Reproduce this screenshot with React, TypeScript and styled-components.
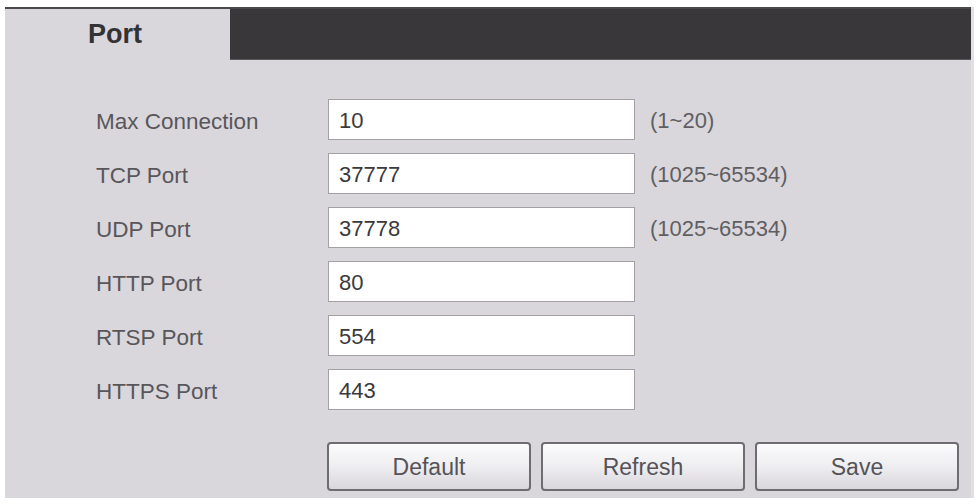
import React from 'react';
import styled, { createGlobalStyle } from 'styled-components';

const GlobalStyle = createGlobalStyle`
  html, body {
    margin: 0;
    padding: 0;
    background: #ffffff;
    font-family: 'Liberation Sans', Arial, sans-serif;
  }
`;

const Panel = styled.div`
  margin: 7px 6px 0 5px;
  width: 966px;
  height: 491px;
  background: #dad7dc;
  border-right: 3px solid #e2e0e3;
  display: flex;
  flex-direction: column;
`;

const Header = styled.div`
  display: flex;
  flex-shrink: 0;
  height: 53px;
  border-top: 2px solid #4a484b;
  box-sizing: border-box;
`;

const Tab = styled.div`
  width: 225px;
  display: flex;
  align-items: center;
  padding-left: 83px;
  box-sizing: border-box;
  font-size: 27px;
  font-weight: bold;
  color: #333235;
  background: #dad7dc;
`;

const TabFill = styled.div`
  flex: 1;
  background: #3a373b;
  border-bottom: 1px solid #5a585b;
`;

const Form = styled.div`
  padding: 39px 0 0 91px;
  display: flex;
  flex-direction: column;
  gap: 13px;
`;

const Row = styled.div`
  display: grid;
  grid-template-columns: 232px 307px auto;
  align-items: center;
  height: 41px;
`;

const Label = styled.label`
  font-size: 22.5px;
  color: #58565a;
  padding-top: 4px;
`;

const Input = styled.input`
  box-sizing: border-box;
  width: 307px;
  height: 41px;
  border: 1px solid #a3a1a5;
  background: #ffffff;
  padding: 2px 0 0 10px;
  font-family: 'Liberation Sans', Arial, sans-serif;
  font-size: 22px;
  color: #3a393c;
  outline: none;
`;

const Hint = styled.span`
  margin-left: 15px;
  font-size: 22px;
  color: #605e62;
  padding-top: 2px;
`;

const Buttons = styled.div`
  display: flex;
  gap: 10px;
  margin: 19px 0 0 231px;
`;

const Button = styled.button`
  width: 204px;
  height: 49px;
  border: 2px solid #6e6c70;
  border-radius: 4px;
  background: linear-gradient(#fbfafc 0%, #eeedf0 50%, #d9d7dc 100%);
  font-family: 'Liberation Sans', Arial, sans-serif;
  font-size: 23px;
  color: #555357;
  padding: 2px 0 0;
  box-shadow: inset 0 1px 0 #ffffff;
`;

const fields = [
  { label: 'Max Connection', value: '10', hint: '(1~20)' },
  { label: 'TCP Port', value: '37777', hint: '(1025~65534)' },
  { label: 'UDP Port', value: '37778', hint: '(1025~65534)' },
  { label: 'HTTP Port', value: '80' },
  { label: 'RTSP Port', value: '554' },
  { label: 'HTTPS Port', value: '443' }
];

export default function App() {
  return (
    <>
      <GlobalStyle />
      <Panel>
        <Header>
          <Tab>Port</Tab>
          <TabFill />
        </Header>
        <Form>
          {fields.map((f) => (
            <Row key={f.label}>
              <Label>{f.label}</Label>
              <Input defaultValue={f.value} />
              {f.hint ? <Hint>{f.hint}</Hint> : <span />}
            </Row>
          ))}
          <Buttons>
            <Button>Default</Button>
            <Button>Refresh</Button>
            <Button>Save</Button>
          </Buttons>
        </Form>
      </Panel>
    </>
  );
}
